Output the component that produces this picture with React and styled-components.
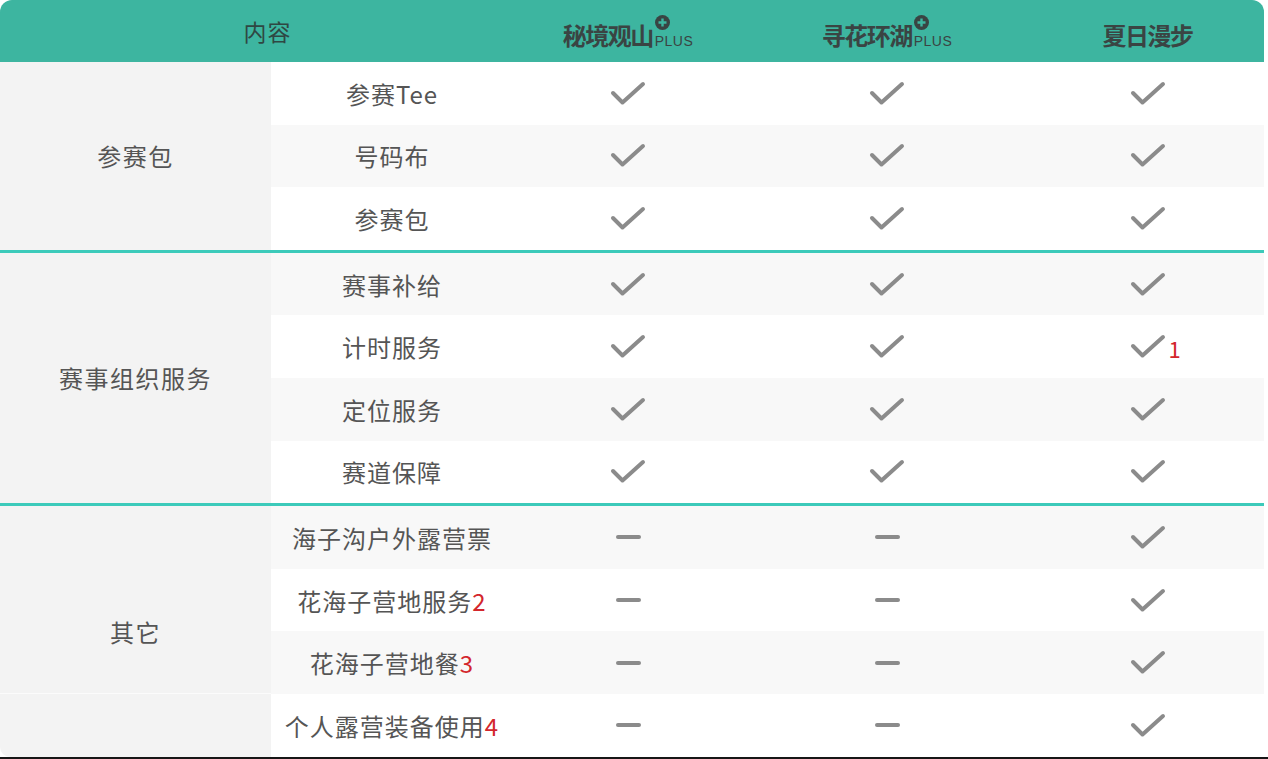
import React from 'react'
import styled, { createGlobalStyle } from 'styled-components'

const GlobalStyle = createGlobalStyle`
  body {
    margin: 0;
    background: #fff;
    font-family: "Noto Sans CJK SC", "Noto Sans", sans-serif;
  }
`

const ROW_H = '62.6px'

const plans = [
  { name: '秘境观山', plus: true },
  { name: '寻花环湖', plus: true },
  { name: '夏日漫步', plus: false }
]

const groups = [
  {
    title: '参赛包',
    rows: [
      { name: '参赛Tee', values: ['y', 'y', 'y'] },
      { name: '号码布', values: ['y', 'y', 'y'] },
      { name: '参赛包', values: ['y', 'y', 'y'] }
    ]
  },
  {
    title: '赛事组织服务',
    rows: [
      { name: '赛事补给', values: ['y', 'y', 'y'] },
      { name: '计时服务', values: ['y', 'y', 'y'], notes: [null, null, '1'] },
      { name: '定位服务', values: ['y', 'y', 'y'] },
      { name: '赛道保障', values: ['y', 'y', 'y'] }
    ]
  },
  {
    title: '其它',
    last: true,
    rows: [
      { name: '海子沟户外露营票', values: ['n', 'n', 'y'] },
      { name: '花海子营地服务', note: '2', values: ['n', 'n', 'y'] },
      { name: '花海子营地餐', note: '3', values: ['n', 'n', 'y'] },
      { name: '个人露营装备使用', note: '4', values: ['n', 'n', 'y'] }
    ]
  }
]

const Check = () => (
  <svg width="36" height="25" viewBox="0 0 36 25">
    <path
      d="M3 12 L12.5 21.5 L33 3"
      fill="none"
      stroke="#8b8b8b"
      strokeWidth="4"
      strokeLinecap="round"
      strokeLinejoin="round"
    />
  </svg>
)

const PlusBadge = () => (
  <svg width="15" height="15" viewBox="0 0 15 15">
    <circle cx="7.5" cy="7.5" r="7.5" fill="#394443" />
    <path d="M7.5 3.5 V11.5 M3.5 7.5 H11.5" stroke="#3db5a0" strokeWidth="2.4" />
  </svg>
)

export default function App() {
  let index = 0
  return (
    <Page>
      <GlobalStyle />
      <Table>
        <Header>
          <HeadLabel>内容</HeadLabel>
          {plans.map(p => (
            <HeadCell key={p.name}>
              <PlanName>{p.name}</PlanName>
              {p.plus && (
                <PlusMark>
                  <PlusBadge />
                  <PlusText>PLUS</PlusText>
                </PlusMark>
              )}
            </HeadCell>
          ))}
        </Header>

        {groups.map((g, gi) => (
          <Group key={gi} $first={gi === 0}>
            <Category $last={g.last}>{g.title}</Category>
            <div>
              {g.rows.map(r => {
                const striped = index++ % 2 === 1
                return (
                  <Row key={r.name} $striped={striped}>
                    <ItemCell>
                      {r.name}
                      {r.note && <Note>{r.note}</Note>}
                    </ItemCell>
                    {r.values.map((v, vi) => (
                      <MarkCell key={vi}>
                        {v === 'y' ? <Check /> : <Dash />}
                        {r.notes && r.notes[vi] && <SideNote>{r.notes[vi]}</SideNote>}
                      </MarkCell>
                    ))}
                  </Row>
                )
              })}
            </div>
          </Group>
        ))}
      </Table>
    </Page>
  )
}

const Page = styled.div`
  width: 1268px;
  border-bottom: 2px solid #161616;
`

const Table = styled.div`
  width: 1264px;
  display: flex;
  flex-direction: column;
`

const Header = styled.div`
  display: grid;
  grid-template-columns: 513px 230px 288px 233px;
  height: 62px;
  background: #3db5a0;
  border-radius: 12px 12px 0 0;
  color: #33423f;
`

const HeadLabel = styled.div`
  display: flex;
  align-items: center;
  justify-content: center;
  padding-left: 22px;
  font-size: 23px;
  letter-spacing: 1px;
  color: #2f4743;
`

const HeadCell = styled.div`
  display: flex;
  align-items: flex-end;
  justify-content: center;
  padding-bottom: 15px;
  box-sizing: border-box;
`

const PlanName = styled.span`
  font-size: 24px;
  font-weight: 700;
  line-height: 24px;
  letter-spacing: -1.5px;
  color: #3a4443;
`

const PlusMark = styled.span`
  display: inline-flex;
  flex-direction: column;
  align-items: flex-start;
  margin-left: 2px;
  margin-bottom: -1px;
`

const PlusText = styled.span`
  font-family: "Liberation Sans", Arial, sans-serif;
  font-size: 14px;
  line-height: 13px;
  letter-spacing: 0.5px;
  color: #3a4443;
  margin-top: 5px;
`

const Group = styled.div`
  display: grid;
  grid-template-columns: 271px 1fr;
  border-top: ${p => (p.$first ? 'none' : '3px solid #3ccaba')};
`

const Category = styled.div`
  display: flex;
  align-items: center;
  justify-content: center;
  background: ${p =>
    p.$last
      ? 'linear-gradient(#f3f3f3 calc(75% - 1px), #fbfbfb 0 75%, #f3f3f3 0)'
      : '#f3f3f3'};
  font-size: 24px;
  letter-spacing: 1.5px;
  color: #555;
  border-bottom-left-radius: ${p => (p.$last ? '10px' : '0')};
`

const Row = styled.div`
  display: grid;
  grid-template-columns: 242px 230px 288px 233px;
  height: ${ROW_H};
  background: ${p => (p.$striped ? '#f8f8f8' : '#ffffff')};
`

const ItemCell = styled.div`
  display: flex;
  align-items: center;
  justify-content: center;
  font-size: 24px;
  letter-spacing: 1px;
  color: #555;
`

const Note = styled.span`
  color: #d3262c;
`

const MarkCell = styled.div`
  position: relative;
  display: flex;
  align-items: center;
  justify-content: center;
`

const SideNote = styled.span`
  position: absolute;
  left: calc(50% + 21px);
  top: 50%;
  transform: translateY(-46%);
  font-size: 22px;
  color: #d3262c;
`

const Dash = styled.span`
  display: block;
  width: 25px;
  height: 4px;
  border-radius: 2px;
  background: #8b8b8b;
`
